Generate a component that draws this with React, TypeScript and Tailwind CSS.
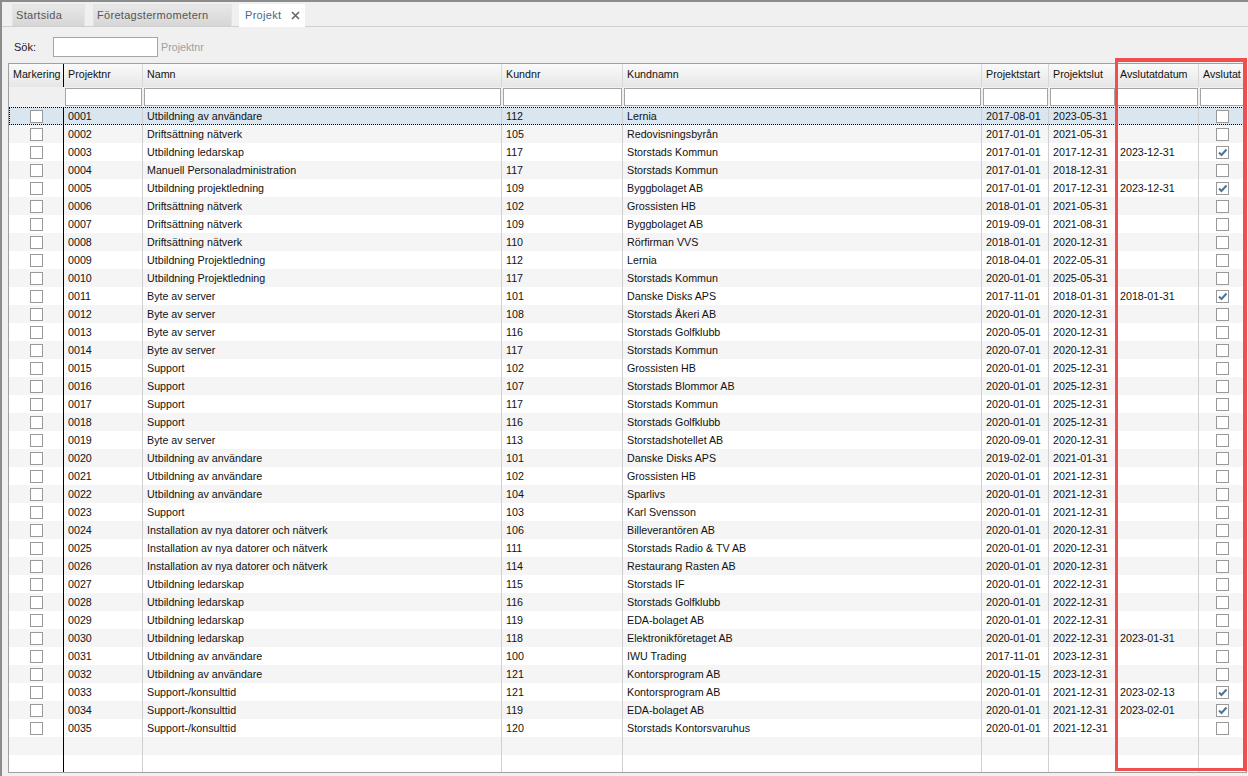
import React from "react";

const cols = "grid-cols-[55px_79px_359px_121px_359px_67px_67px_83px_1fr]";

const raw = `0001|Utbildning av användare|112|Lernia|2017-08-01|2023-05-31||0
0002|Driftsättning nätverk|105|Redovisningsbyrån|2017-01-01|2021-05-31||0
0003|Utbildning ledarskap|117|Storstads Kommun|2017-01-01|2017-12-31|2023-12-31|1
0004|Manuell Personaladministration|117|Storstads Kommun|2017-01-01|2018-12-31||0
0005|Utbildning projektledning|109|Byggbolaget AB|2017-01-01|2017-12-31|2023-12-31|1
0006|Driftsättning nätverk|102|Grossisten HB|2018-01-01|2021-05-31||0
0007|Driftsättning nätverk|109|Byggbolaget AB|2019-09-01|2021-08-31||0
0008|Driftsättning nätverk|110|Rörfirman VVS|2018-01-01|2020-12-31||0
0009|Utbildning Projektledning|112|Lernia|2018-04-01|2022-05-31||0
0010|Utbildning Projektledning|117|Storstads Kommun|2020-01-01|2025-05-31||0
0011|Byte av server|101|Danske Disks APS|2017-11-01|2018-01-31|2018-01-31|1
0012|Byte av server|108|Storstads Åkeri AB|2020-01-01|2020-12-31||0
0013|Byte av server|116|Storstads Golfklubb|2020-05-01|2020-12-31||0
0014|Byte av server|117|Storstads Kommun|2020-07-01|2020-12-31||0
0015|Support|102|Grossisten HB|2020-01-01|2025-12-31||0
0016|Support|107|Storstads Blommor AB|2020-01-01|2025-12-31||0
0017|Support|117|Storstads Kommun|2020-01-01|2025-12-31||0
0018|Support|116|Storstads Golfklubb|2020-01-01|2025-12-31||0
0019|Byte av server|113|Storstadshotellet AB|2020-09-01|2020-12-31||0
0020|Utbildning av användare|101|Danske Disks APS|2019-02-01|2021-01-31||0
0021|Utbildning av användare|102|Grossisten HB|2020-01-01|2021-12-31||0
0022|Utbildning av användare|104|Sparlivs|2020-01-01|2021-12-31||0
0023|Support|103|Karl Svensson|2020-01-01|2021-12-31||0
0024|Installation av nya datorer och nätverk|106|Billeverantören AB|2020-01-01|2020-12-31||0
0025|Installation av nya datorer och nätverk|111|Storstads Radio & TV AB|2020-01-01|2020-12-31||0
0026|Installation av nya datorer och nätverk|114|Restaurang Rasten AB|2020-01-01|2020-12-31||0
0027|Utbildning ledarskap|115|Storstads IF|2020-01-01|2022-12-31||0
0028|Utbildning ledarskap|116|Storstads Golfklubb|2020-01-01|2022-12-31||0
0029|Utbildning ledarskap|119|EDA-bolaget AB|2020-01-01|2022-12-31||0
0030|Utbildning ledarskap|118|Elektronikföretaget AB|2020-01-01|2022-12-31|2023-01-31|0
0031|Utbildning av användare|100|IWU Trading|2017-11-01|2023-12-31||0
0032|Utbildning av användare|121|Kontorsprogram AB|2020-01-15|2023-12-31||0
0033|Support-/konsulttid|121|Kontorsprogram AB|2020-01-01|2021-12-31|2023-02-13|1
0034|Support-/konsulttid|119|EDA-bolaget AB|2020-01-01|2021-12-31|2023-02-01|1
0035|Support-/konsulttid|120|Storstads Kontorsvaruhus|2020-01-01|2021-12-31||0`;

const rows = raw.split("\n").map((l) => l.split("|"));
const headers = ["Markering", "Projektnr", "Namn", "Kundnr", "Kundnamn", "Projektstart", "Projektslut", "Avslutatdatum", "Avslutat"];

function Check({ on }: { on?: boolean }) {
  return (
    <span className="flex h-[13px] w-[13px] items-center justify-center border border-[#999999] bg-white">
      {on && (
        <svg width="11" height="11" viewBox="0 0 11 11">
          <path d="M2 5.5 L4.5 8 L9.5 2.5" fill="none" stroke="#4a7596" strokeWidth="2" />
        </svg>
      )}
    </span>
  );
}

function Cell({ children, first }: { children?: React.ReactNode; first?: boolean }) {
  return (
    <div
      className={`flex h-full min-w-0 items-center overflow-hidden whitespace-nowrap border-r pl-[4px] ${
        first ? "border-black" : "border-[#d0d0d0]"
      }`}
    >
      {children}
    </div>
  );
}

function Tab({ label, w }: { label: string; w: string }) {
  return (
    <div className={`flex h-[22px] items-center rounded-t-[1px] border border-b-0 border-[#e4e4e4] bg-[linear-gradient(#e8e8e8,#d6d6d6)] pl-[3px] text-[11px] text-[#555] tracking-[0.3px] ${w}`}>
      {label}
    </div>
  );
}

export default function App() {
  return (
    <div className="relative h-[776px] w-[1248px] overflow-hidden border-l-2 border-t-2 border-[#8c8c8c] bg-[#f0f0f0] font-['Liberation_Sans',sans-serif] text-[10.7px] text-[#111]">
      <div className="flex h-[25px] items-end gap-[8px] border-b border-[#d0d0d0] pl-[10px]">
        <Tab label="Startsida" w="w-[73px]" />
        <Tab label="Företagstermometern" w="w-[139px]" />
        <div className="mb-[-1px] ml-[-1px] flex h-[23px] w-[66px] items-center justify-between bg-white pl-[6px] pr-[5px] text-[11px] tracking-[0.3px] text-[#44688a]">
          Projekt
          <svg width="9" height="9" viewBox="0 0 9 9">
            <path d="M1 1 L8 8 M8 1 L1 8" stroke="#666" strokeWidth="1.6" />
          </svg>
        </div>
      </div>

      <div className="flex h-[36px] items-center pl-[12px] pt-[4px]">
        <span className="w-[39px] text-[11px] text-[#222]">Sök:</span>
        <div className="h-[20px] w-[105px] border border-[#a5a5a5] bg-white" />
        <span className="ml-[3px] text-[#a0a0a0]">Projektnr</span>
      </div>

      <div className="ml-[6px] mr-[1px] flex h-[710px] flex-col border border-[#a0a0a0] bg-white">
        <div className={`grid h-[23px] shrink-0 ${cols} bg-[linear-gradient(#fafafa,#e6e6e6)]`}>
          {headers.map((h, i) => (
            <div
              key={h}
              className={`flex items-center overflow-hidden whitespace-nowrap border-r pb-[2px] pl-[4px] ${
                i === 0 ? "border-black" : "border-[#d8d8d8]"
              }`}
            >
              {h}
            </div>
          ))}
        </div>
        <div className={`grid h-[20px] shrink-0 ${cols} bg-[#f0f0f0]`}>
          <div />
          {headers.slice(1).map((h) => (
            <div key={h} className="px-[1px] pt-[1px]">
              <div className="h-[18px] border border-[#a5a5a5] bg-white" />
            </div>
          ))}
        </div>
        {rows.map((r, i) => (
          <div
            key={r[0]}
            className={`grid h-[18px] shrink-0 ${cols} ${
              i === 0
                ? "bg-[#d9e5ef] outline-1 -outline-offset-1 outline-dotted outline-black"
                : i % 2
                  ? "bg-[#f5f5f5]"
                  : "bg-white"
            }`}
          >
            <Cell first>
              <span className="ml-[17px]">
                <Check />
              </span>
            </Cell>
            <Cell>{r[0]}</Cell>
            <Cell>{r[1]}</Cell>
            <Cell>{r[2]}</Cell>
            <Cell>{r[3]}</Cell>
            <Cell>{r[4]}</Cell>
            <Cell>{r[5]}</Cell>
            <Cell>{r[6]}</Cell>
            <div className="flex items-center justify-center pr-[1px]">
              <Check on={r[7] === "1"} />
            </div>
          </div>
        ))}
        <div className={`grid h-[18px] shrink-0 ${cols} bg-[#f5f5f5]`}>
          {headers.map((h, i) => (
            <Cell key={h} first={i === 0} />
          ))}
        </div>
        <div className={`grid min-h-0 flex-1 ${cols} bg-white`}>
          {headers.map((h, i) => (
            <Cell key={h} first={i === 0} />
          ))}
        </div>
      </div>

      <div className="absolute left-[1113px] top-[56px] h-[713px] w-[132px] border-[3px] border-r-4 border-t-4 border-[#ef4f4f]" />
    </div>
  );
}
